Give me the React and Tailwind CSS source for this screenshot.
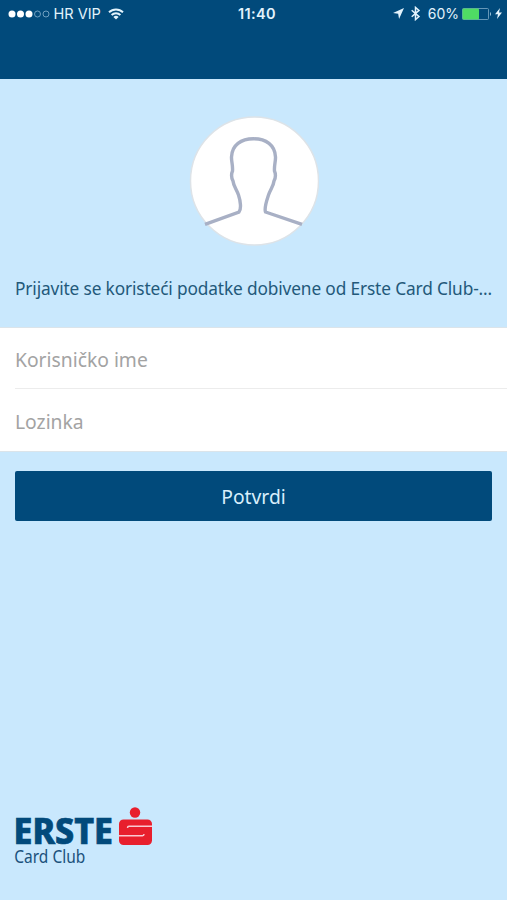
import React, { useState } from "react";

function StatusBar() {
  return (
    <div className="grid grid-cols-3 items-center h-[27px] pl-2 pr-[5px] text-white font-['Inter','Liberation_Sans',sans-serif]">
      <div className="flex items-center">
        <svg className="w-[42px] h-2 shrink-0" viewBox="0 0 42 8">
          <circle cx="4" cy="4" r="3.5" fill="#fff" />
          <circle cx="12.5" cy="4" r="3.5" fill="#fff" />
          <circle cx="21" cy="4" r="3.5" fill="#fff" />
          <circle cx="29.5" cy="4" r="3" fill="none" stroke="#9cc3dc" strokeWidth="0.7" />
          <circle cx="38" cy="4" r="3" fill="none" stroke="#9cc3dc" strokeWidth="0.7" />
        </svg>
        <span className="ml-[3.5px] pt-px text-[14.5px] leading-none whitespace-nowrap text-[#e3f3fc]">
          HR VIP
        </span>
        <svg className="ml-[7px] w-4 h-3 shrink-0" viewBox="0 0 16 12" fill="none" stroke="#e3f3fc" strokeWidth="1.9">
          <path d="M1 4.3a10 10 0 0 1 14 0" />
          <path d="M3.6 7a6.3 6.3 0 0 1 8.8 0" />
          <path d="M8 11.6 5.4 9a3.7 3.7 0 0 1 5.2 0z" fill="#e3f3fc" stroke="none" />
        </svg>
      </div>

      <div className="pt-px pl-1 text-center text-[14.5px] leading-none font-semibold tracking-[0.4px] text-[#e3f3fc]">
        11:40
      </div>

      <div className="flex items-center justify-end">
        <svg className="w-[11px] h-[11px]" viewBox="0 0 10 10" fill="#e3f3fc">
          <path d="M10 0 0 4.5l4.7.8L5.5 10z" />
        </svg>
        <svg className="ml-[6px] w-[11px] h-[15px]" viewBox="0 0 9 15" fill="none" stroke="#e3f3fc" strokeWidth="1.5">
          <path d="M.7 4.2 8 10.6 4.5 13.6V1.4L8 4.4.7 10.8" />
        </svg>
        <span className="ml-[7px] text-[14px] leading-none text-[#e3f3fc]">60%</span>
        <svg className="ml-[3px] w-[30px] h-3" viewBox="0 0 30 12">
          <rect x="0.5" y="0.5" width="26" height="11" rx="1" fill="none" stroke="#7fabc8" strokeWidth="0.8" />
          <rect x="0.5" y="0.5" width="16.5" height="11" rx="1" fill="#4fdc64" />
          <path d="M28 4v4c1.3-.5 1.3-3.5 0-4z" fill="#a9cde2" />
        </svg>
        <svg className="ml-[3px] w-[7px] h-[11px]" viewBox="0 0 7 11" fill="#e3f3fc">
          <path d="M5 0 0 6.2h3L2 11l5-6.4H4z" />
        </svg>
      </div>
    </div>
  );
}

function Avatar() {
  return (
    <svg className="w-[130px] h-[130px]" viewBox="0 0 130 130">
      <circle cx="65.5" cy="65" r="64" fill="#fff" stroke="#dde3e8" strokeWidth="1.5" />
      <path
        d="M16 108.3 50 96C52.5 93 51.5 85 49.5 79C47.5 73 44.5 70 44 65C42 61 42 58.5 43.500 55C44 49 42.3 46 42.5 41C43 29 52 22.8 64.500 22.8C77 22.8 86 29 86.5 41C86.7 46 85 49 85.500 55C87 58.5 87 61 85 65C84.5 70 81.5 73 79.5 79C77.5 85 75 92 76.5 96L113 108.3"
        fill="none"
        stroke="#a8b0c5"
        strokeWidth="3.4"
      />
    </svg>
  );
}

function Logo() {
  return (
    <svg
      className="w-[144px] h-[62px] font-['Noto_Sans','Open_Sans',sans-serif]"
      viewBox="-4 0 144 62"
    >
      <text
        x="-1.5"
        y="38.3"
        fontSize="35.5"
        fontWeight="800"
        textLength="99.5"
        lengthAdjust="spacingAndGlyphs"
        fill="#024a7b"
        stroke="#024a7b"
        strokeWidth="0.7"
      >
        ERSTE
      </text>
      <text x="-0.7" y="57.2" fontSize="17.5" fontWeight="400" textLength="71" lengthAdjust="spacingAndGlyphs" fill="#1b527c">
        Card Club
      </text>
      <circle cx="120" cy="6.5" r="5.2" fill="#e81f2d" />
      <rect x="104" y="13.5" width="33" height="25.5" rx="4.5" fill="#e81f2d" />
      <path
        d="M137 20.3H114Q112.500 20.3 112.500 22M104 29.7H127.500Q129 29.7 129 28"
        fill="none"
        stroke="#f9c9d2"
        strokeWidth="1.5"
      />
    </svg>
  );
}

export default function App() {
  const [username, setUsername] = useState("");
  const [password, setPassword] = useState("");

  const handleSubmit = (e) => {
    e.preventDefault();
  };

  return (
    <div className="flex flex-col w-full h-screen overflow-hidden bg-[#c9e8fd] font-['Noto_Sans','Open_Sans',sans-serif]">
      <header className="h-[79px] shrink-0 bg-[#014a7b]">
        <StatusBar />
      </header>

      <div className="flex flex-col items-center h-[248px] shrink-0 pt-[37px]">
        <Avatar />
        <p className="w-full px-[15px] mt-[31px] text-[17.3px] leading-6 tracking-[-0.14px] text-[#23597a] whitespace-nowrap">
          Prijavite se koristeći podatke dobivene od Erste Card Club-...
        </p>
      </div>

      <form onSubmit={handleSubmit}>
        <div className="h-[125px] pl-[15px] bg-white border-t border-b border-[#dbe4ea]">
          <input
            type="text"
            value={username}
            onChange={(e) => setUsername(e.target.value)}
            placeholder="Korisničko ime"
            className="block w-full h-[61px] pt-0.5 border-b border-[#ececec] text-[19.3px] text-gray-700 placeholder:text-[#a3a3a3] focus:outline-none"
          />
          <input
            type="password"
            value={password}
            onChange={(e) => setPassword(e.target.value)}
            placeholder="Lozinka"
            className="block w-full h-[62px] pt-0.5 text-[19.3px] text-gray-700 placeholder:text-[#a3a3a3] focus:outline-none"
          />
        </div>
        <div className="px-[15px] pt-[19px]">
          <button
            type="submit"
            className="block w-full h-[50px] pt-0.5 rounded-xs bg-[#014a7b] text-[19.3px] text-[#d9effc]"
          >
            Potvrdi
          </button>
        </div>
      </form>

      <footer className="mt-auto pl-[11px] pb-[32px]">
        <Logo />
      </footer>
    </div>
  );
}
